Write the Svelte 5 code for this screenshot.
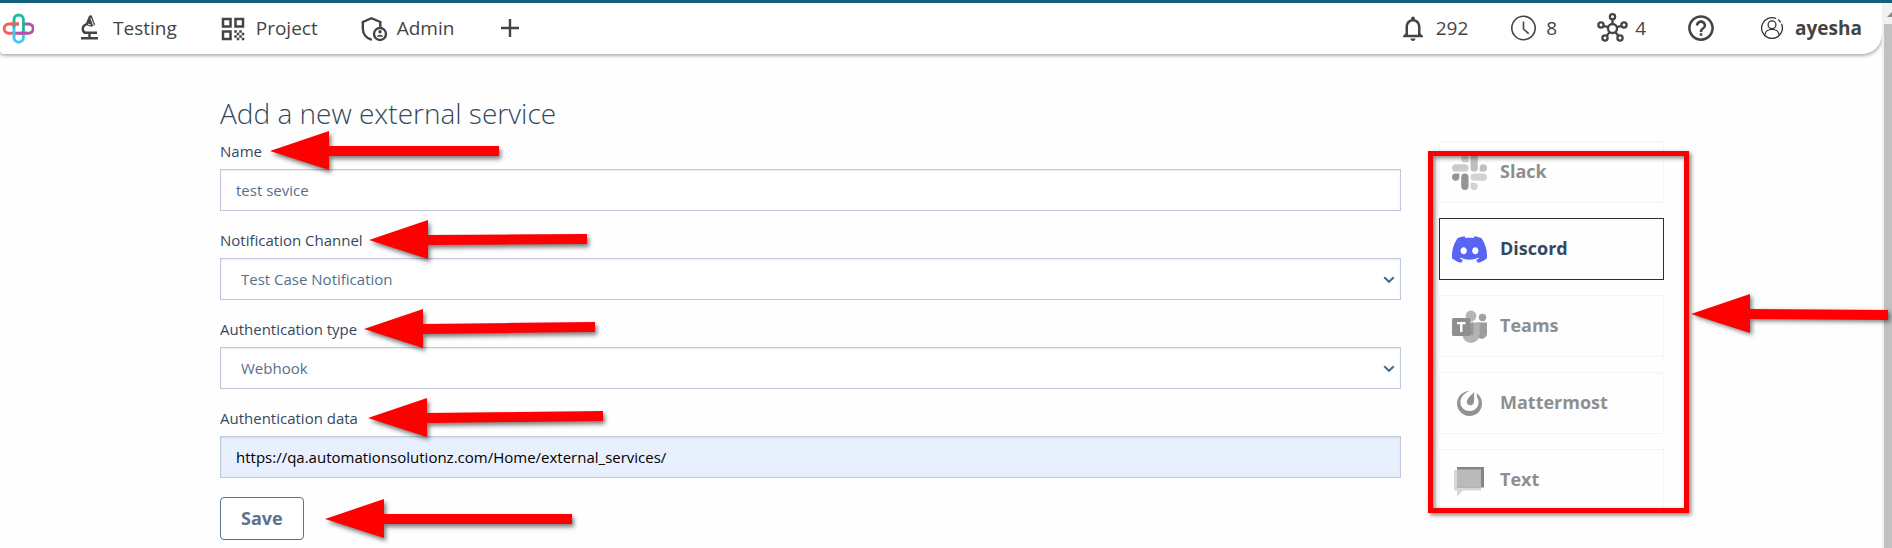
<script>
  let name = $state('test sevice');
  let channel = $state('Test Case Notification');
  let authType = $state('Webhook');
  let authData = $state('https://qa.automationsolutionz.com/Home/external_services/');
  let selected = $state('Discord');
  const services = ['Slack', 'Discord', 'Teams', 'Mattermost', 'Text'];
</script>

{#snippet arrow(length, gap, tilt)}
  <svg class="arrow" style="left: calc(100% + {gap}px)" width={length} height="40" aria-hidden="true">
    <polygon points="0,20 59,0 59,15 {length},{15 - tilt} {length},{25 - tilt} 59,25 59,39" />
  </svg>
{/snippet}

{#snippet chevron()}
  <svg class="chevron" width="12" height="8" viewBox="0 0 12 8" aria-hidden="true">
    <path d="M1.2 1.2 6 5.8l4.8-4.6" fill="none" stroke="#4a6a8a" stroke-width="2" />
  </svg>
{/snippet}

<div class="app">
  <div class="page">
    <header>
      <nav class="group">
        <a class="item" href="#home" aria-label="Home">
          <svg class="icon" viewBox="0 0 32 32" fill="none" stroke-width="2.9">
            <path d="M17 11H6.800a4.600 4.600 0 0 0 0 9.200H12" stroke="#f25f5f" />
            <path d="M21 11h5.600a4.600 4.600 0 0 1 0 9.200H12" stroke="#bb4fa5" />
            <path d="M12 15v9.500a4.700 4.700 0 0 0 9.400 0V20" stroke="#3fc8f4" />
            <path d="M12 15V6.700a4.700 4.700 0 0 1 9.400 0V19" stroke="#1fba9c" />
            <path d="M9 11h8" stroke="#f25f5f" />
            <path d="M18 20.200h7" stroke="#bb4fa5" />
          </svg>
        </a>
        <a class="item" href="#testing">
          <svg class="icon" viewBox="0 0 32 32" fill="none" stroke="currentColor" stroke-width="2.400">
            <path d="M7 25.200h17M15.500 20v5M10 19.800h13" />
            <path d="M12.300 11.400c-3.900 1.400-4.900 5.600-1.400 8.600" />
            <path d="M15.500 3 11.900 11.500l5.200 1.800 3.500-1.600-3.300-9z" fill="currentColor" stroke-width="1" />
            <path d="m16.700 5 2.900 7.500M14 11l2.600 1" stroke="#fff" stroke-width="1" />
          </svg>
          <span class="text">Testing</span>
        </a>
        <a class="item" href="#project">
          <svg class="icon" viewBox="-.8 -.8 25.600 25.600" fill="currentColor">
            <path d="M3 11h8V3H3v8zm2-6h4v4H5V5zM3 21h8v-8H3v8zm2-6h4v4H5v-4zM13 3v8h8V3h-8zm6 6h-4V5h4v4zM19 19h2v2h-2zM13 13h2v2h-2zM15 15h2v2h-2zM13 17h2v2h-2zM15 19h2v2h-2zM17 17h2v2h-2zM17 13h2v2h-2zM19 15h2v2h-2z" />
          </svg>
          <span class="text">Project</span>
        </a>
        <a class="item" href="#admin">
          <svg class="icon" viewBox="0 0 32 32" fill="none" stroke="currentColor" stroke-width="2.400">
            <path d="M22.300 14V9L13.500 5.200 4.800 9v6.500c0 5.500 3.700 9.800 9 11.300" />
            <circle cx="22" cy="21" r="6" />
            <circle cx="22" cy="18.800" r="1.700" fill="currentColor" stroke="none" />
            <path d="M18.800 23.700c.3-2.700 6.100-2.700 6.400 0z" fill="currentColor" stroke="none" />
          </svg>
          <span class="text">Admin</span>
        </a>
        <button class="item" type="button" aria-label="Add">
          <svg class="icon" viewBox="0 0 32 32" fill="none" stroke="currentColor" stroke-width="2.400">
            <path d="M16 6v18M7 15h18" />
          </svg>
        </button>
      </nav>
      <nav class="group status">
        <a class="item" href="#notifications">
          <svg class="icon" viewBox="-.8 -.3 25.600 25.600" fill="currentColor">
            <path d="M12 22c1.100 0 2-.9 2-2h-4c0 1.100.9 2 2 2zm6-6v-5c0-3.070-1.630-5.640-4.500-6.320V4c0-.83-.67-1.500-1.500-1.500s-1.500.67-1.500 1.500v.68C7.640 5.360 6 7.920 6 11v5l-2 2v1h16v-1l-2-2zm-2 1H8v-6c0-2.480 1.510-4.500 4-4.500s4 2.020 4 4.500v6z" />
          </svg>
          <span class="text">292</span>
        </a>
        <a class="item" href="#recent">
          <svg class="icon" viewBox="0 0 32 32" fill="none" stroke="currentColor" stroke-width="1.600">
            <circle cx="16.500" cy="15" r="11.700" />
            <path d="M16.500 8.500V16l5.200 4.700" />
          </svg>
          <span class="text">8</span>
        </a>
        <a class="item" href="#nodes">
          <svg class="icon" viewBox="0 0 32 32" fill="none" stroke="currentColor" stroke-width="2.300">
            <circle cx="16.500" cy="15.500" r="4.500" />
            <circle cx="16.500" cy="3.800" r="2.600" />
            <circle cx="5" cy="12" r="2.600" />
            <circle cx="28" cy="12" r="2.600" />
            <circle cx="9" cy="25" r="2.600" />
            <circle cx="24" cy="25" r="2.600" />
            <path d="M16.500 6.500V11M7.500 12.800l4.700 1.400M25.500 12.800l-4.700 1.400M10.700 22.800l3-3.700M22.300 22.800l-3-3.700" />
          </svg>
          <span class="text">4</span>
        </a>
        <a class="item" href="#help" aria-label="Help">
          <svg class="icon" viewBox="-.4 .3 24.800 24.800" fill="currentColor">
            <path d="M11 18h2v-2h-2v2zm1-16C6.480 2 2 6.480 2 12s4.480 10 10 10 10-4.480 10-10S17.520 2 12 2zm0 18c-4.410 0-8-3.590-8-8s3.590-8 8-8 8 3.590 8 8-3.590 8-8 8zm0-14c-2.210 0-4 1.790-4 4h2c0-1.100.9-2 2-2s2 .9 2 2c0 2-3 1.750-3 5h2c0-2.250 3-2.500 3-5 0-2.210-1.790-4-4-4z" />
          </svg>
        </a>
        <a class="item user" href="#account">
          <svg class="icon" viewBox="0 0 32 32" fill="none" stroke="#333" stroke-width="1.300">
            <circle cx="16" cy="15" r="10.400" stroke-dasharray="57 2 4 2.350" transform="rotate(-22 16 15)" />
            <circle cx="16" cy="11.800" r="3.900" />
            <path d="M8.800 22.300c.5-8 13.900-8 14.400 0" />
          </svg>
          <span class="text">ayesha</span>
        </a>
      </nav>
    </header>

    <main>
      <form onsubmit={(e) => e.preventDefault()}>
        <h1>Add a new external service</h1>
        <div class="fields">
          <div class="field">
            <label for="name">Name{@render arrow(229, 8, 0)}</label>
            <input id="name" type="text" bind:value={name} />
          </div>
          <div class="field">
            <label for="channel">Notification Channel{@render arrow(218, 6, 1)}</label>
            <div class="select">
              <select id="channel" bind:value={channel}>
                <option>Test Case Notification</option>
              </select>
              {@render chevron()}
            </div>
          </div>
          <div class="field">
            <label for="type">Authentication type{@render arrow(231, 7, 2)}</label>
            <div class="select">
              <select id="type" bind:value={authType}>
                <option>Webhook</option>
              </select>
              {@render chevron()}
            </div>
          </div>
          <div class="field">
            <label for="data">Authentication data{@render arrow(235, 10, 2)}</label>
            <input id="data" class="filled" type="text" bind:value={authData} />
          </div>
        </div>
        <button class="save" type="submit"><span class="text">Save</span>{@render arrow(247, 22, 0)}</button>
      </form>

      <aside>
        {#each services as service}
          <button
            class="card"
            class:active={service === selected}
            type="button"
            aria-pressed={service === selected}
            onclick={() => (selected = service)}
          >
            {#if service === 'Slack'}
              <svg viewBox="0 0 24 24">
                <path fill="#949494" d="M5.042 15.165a2.528 2.528 0 0 1-2.520 2.523A2.528 2.528 0 0 1 0 15.165a2.527 2.527 0 0 1 2.522-2.520h2.520v2.520zM6.313 15.165a2.527 2.527 0 0 1 2.521-2.520 2.527 2.527 0 0 1 2.521 2.520v6.313A2.528 2.528 0 0 1 8.834 24a2.528 2.528 0 0 1-2.521-2.522v-6.313z" />
                <path fill="#cbcbcb" d="M8.834 5.042a2.528 2.528 0 0 1-2.521-2.520A2.528 2.528 0 0 1 8.834 0a2.528 2.528 0 0 1 2.521 2.522v2.520H8.834zM8.834 6.313a2.528 2.528 0 0 1 2.521 2.521 2.528 2.528 0 0 1-2.521 2.521H2.522A2.528 2.528 0 0 1 0 8.834a2.528 2.528 0 0 1 2.522-2.521h6.312z" />
                <path fill="#bfbfbf" d="M18.956 8.834a2.528 2.528 0 0 1 2.522-2.521A2.528 2.528 0 0 1 24 8.834a2.528 2.528 0 0 1-2.522 2.521h-2.522V8.834zM17.688 8.834a2.528 2.528 0 0 1-2.523 2.521 2.527 2.527 0 0 1-2.520-2.521V2.522A2.527 2.527 0 0 1 15.165 0a2.528 2.528 0 0 1 2.523 2.522v6.312z" />
                <path fill="#d3d3d3" d="M15.165 18.956a2.528 2.528 0 0 1 2.523 2.522A2.528 2.528 0 0 1 15.165 24a2.527 2.527 0 0 1-2.520-2.522v-2.522h2.520zM15.165 17.688a2.527 2.527 0 0 1-2.520-2.523 2.526 2.526 0 0 1 2.520-2.520h6.313A2.527 2.527 0 0 1 24 15.165a2.528 2.528 0 0 1-2.522 2.523h-6.313z" />
              </svg>
            {:else if service === 'Discord'}
              <svg viewBox="0 0 24 24">
                <path fill="#5865f2" d="M20.317 4.3698a19.7913 19.7913 0 00-4.8851-1.5152.0741.0741 0 00-.0785.0371c-.211.3753-.4447.8648-.6083 1.2495-1.8447-.2762-3.68-.2762-5.4868 0-.1636-.3933-.4058-.8742-.6177-1.2495a.077.077 0 00-.0785-.037 19.7363 19.7363 0 00-4.8852 1.515.0699.0699 0 00-.0321.0277C.5334 9.0458-.319 13.5799.0992 18.0578a.0824.0824 0 00.0312.0561c2.0528 1.5076 4.0413 2.4228 5.9929 3.0294a.0777.0777 0 00.0842-.0276c.4616-.6304.8731-1.2952 1.226-1.9942a.076.076 0 00-.0416-.1057c-.6528-.2476-1.2743-.5495-1.8722-.8923a.077.077 0 01-.0076-.1277c.1258-.0943.2517-.1923.3718-.2914a.0743.0743 0 01.0776-.0105c3.9278 1.7933 8.18 1.7933 12.0614 0a.0739.0739 0 01.0785.0095c.1202.099.246.1981.3728.2924a.077.077 0 01-.0066.1276 12.2986 12.2986 0 01-1.873.8914.0766.0766 0 00-.0407.1067c.3604.698.7719 1.3628 1.225 1.9932a.076.076 0 00.0842.0286c1.961-.6067 3.9495-1.5219 6.0023-3.0294a.077.077 0 00.0313-.0552c.5004-5.177-.8382-9.6739-3.5485-13.6604a.061.061 0 00-.0312-.0286zM8.02 15.3312c-1.1825 0-2.1569-1.0857-2.1569-2.419 0-1.3332.9555-2.4189 2.157-2.4189 1.2108 0 2.1757 1.0952 2.1568 2.419 0 1.3332-.9555 2.4189-2.1569 2.4189zm7.9748 0c-1.1825 0-2.1569-1.0857-2.1569-2.419 0-1.3332.9554-2.4189 2.1569-2.4189 1.2108 0 2.1757 1.0952 2.1568 2.419 0 1.3332-.946 2.4189-2.1568 2.4189Z" />
              </svg>
            {:else if service === 'Teams'}
              <svg viewBox="0 0 35 35">
                <circle cx="30.500" cy="8.500" r="3.700" fill="#a0a0a0" />
                <path d="M25 13.500h10v11a5.500 5.500 0 0 1-9.500 3.500z" fill="#9c9c9c" />
                <circle cx="19" cy="7" r="5.400" fill="#b5b5b5" />
                <path d="M10.500 13.500h17v12a8.500 8.500 0 0 1-17 0z" fill="#b3b3b3" />
                <path d="M19.500 13.500h2v12.500h-9z" fill="#989898" />
                <rect x="0" y="9" width="18.500" height="18" rx="1.500" fill="#8f8f8f" />
                <path d="M5 13h8.500v2.200h-3V23H8v-7.800H5z" fill="#fff" />
              </svg>
            {:else if service === 'Mattermost'}
              <svg viewBox="0 0 35 35">
                <path d="M17.500 5C10.500 5 5 10.600 5 17.500S10.600 30 17.500 30 30 24.500 30 17.500c0-4.400-2.100-7.900-5.300-10.200l.2 3.400c4.300 6.300.2 14.300-7 14.300-6.200 0-10.200-4.300-9.500-9.900C9 10.600 12.500 7 17.500 5z" fill="#929292" />
                <path d="M22 6.200c.3 2.700.2 7.800-.2 10.200-.6 4.200-7 3.700-7-.3C14.800 12.500 19 9.300 22 6.200z" fill="#929292" />
              </svg>
            {:else}
              <svg viewBox="0 0 35 35">
                <path d="M2 7h27v20.500H11L5 33.500v-6H2z" fill="#d6d6d6" />
                <path d="M5 4h27v20.500H5z" fill="#858585" />
                <path d="M5 6.500h24v18H5z" fill="#bababa" />
              </svg>
            {/if}
            <span class="text">{service}</span>
          </button>
        {/each}
        <div class="frame">{@render arrow(197, 7, -1)}</div>
      </aside>
    </main>
  </div>
  <div class="scrollbar" aria-hidden="true">
    <svg width="10" height="21" viewBox="0 0 10 21"><path d="M5 14 10 9v5z" fill="#8a8a8a" /></svg>
    <div class="thumb"></div>
  </div>
</div>

<style>
  :global(body) {
    margin: 0;
    background: #fefefe;
    font-family: 'Open Sans', sans-serif;
  }
  .app {
    display: flex;
    box-sizing: border-box;
    min-height: 100vh;
    border-top: 3px solid #13617a;
    overflow: hidden;
  }
  .page {
    flex: 1;
    min-width: 0;
  }
  header {
    display: flex;
    justify-content: space-between;
    padding: 10px 20px 9px 2px;
    background: #fff;
    border-radius: 0 0 20px 4px;
    box-shadow: 0 1px 4px rgba(0, 0, 0, 0.45);
  }
  .group {
    display: flex;
    gap: 40px;
  }
  .status {
    gap: 39px;
  }
  .item {
    display: flex;
    align-items: center;
    gap: 7px;
    height: 32px;
    padding: 0;
    border: 0;
    background: none;
    color: #444;
    font-size: 19px;
    line-height: 28px;
    text-decoration: none;
  }
  .text {
    display: block;
    padding-bottom: 2px;
  }
  .user {
    font-weight: 700;
  }
  .icon {
    width: 32px;
    height: 32px;
  }
  main {
    display: flex;
    gap: 38px;
    padding: 40px 218px 0 220px;
  }
  form {
    flex: 1;
    min-width: 0;
  }
  h1 {
    margin: 0 0 9px;
    color: #34495e;
    font-size: 28px;
    font-weight: 300;
    line-height: 38px;
  }
  .fields {
    display: flex;
    flex-direction: column;
    gap: 19px;
  }
  .field {
    display: flex;
    flex-direction: column;
    align-items: flex-start;
    gap: 8px;
  }
  label {
    position: relative;
    color: #34495e;
    font-size: 15px;
    line-height: 20px;
  }
  .select {
    position: relative;
    width: 100%;
  }
  input,
  select {
    display: block;
    box-sizing: border-box;
    width: 100%;
    height: 42px;
    padding: 0 15px;
    border: 1px solid #bfc8da;
    border-radius: 0;
    background: #fff;
    box-shadow: inset 0 1px 2px rgba(0, 0, 0, 0.08);
    color: #55708c;
    font-family: inherit;
    font-size: 15px;
    outline: 0;
  }
  select {
    appearance: none;
    padding: 0 20px;
  }
  .filled {
    background: #e8f0fe;
    color: #000;
  }
  .chevron {
    position: absolute;
    right: 6px;
    top: 18px;
    pointer-events: none;
  }
  .save {
    position: relative;
    height: 43px;
    margin-top: 19px;
    padding: 0 20px;
    border: 1px solid #5c728c;
    border-radius: 4px;
    background: #fff;
    color: #5c728c;
    font-family: inherit;
    font-size: 18px;
    font-weight: 700;
  }
  .arrow {
    position: absolute;
    top: 50%;
    margin-top: -20px;
    overflow: visible;
    pointer-events: none;
    z-index: 2;
    fill: #f00;
    filter: drop-shadow(2px 3px 2px rgba(0, 0, 0, 0.5));
  }
  aside {
    position: relative;
    display: flex;
    flex-direction: column;
    gap: 15px;
    width: 225px;
    margin-top: 47px;
    align-self: flex-start;
  }
  .card {
    display: flex;
    align-items: center;
    gap: 13px;
    height: 62px;
    padding: 0 12px;
    border: 1px solid #f5f5f5;
    background: none;
    color: #8f8f8f;
    font-family: inherit;
    font-size: 18px;
    font-weight: 700;
  }
  .card svg {
    width: 35px;
    height: 35px;
  }
  .card.active {
    border-color: #2c2f33;
    color: #34495e;
  }
  .frame {
    position: absolute;
    inset: 10px -25px -2px -11px;
    border: 5px solid #f00;
    filter: drop-shadow(2px 2px 2px rgba(0, 0, 0, 0.5));
    pointer-events: none;
  }
  .frame .arrow {
    top: 45%;
    filter: none;
  }
  .scrollbar {
    display: flex;
    flex-direction: column;
    width: 10px;
    background: #f1f1f1;
  }
  .thumb {
    flex: 1;
    margin-left: 2px;
    background: #c1c1c1;
  }
</style>
